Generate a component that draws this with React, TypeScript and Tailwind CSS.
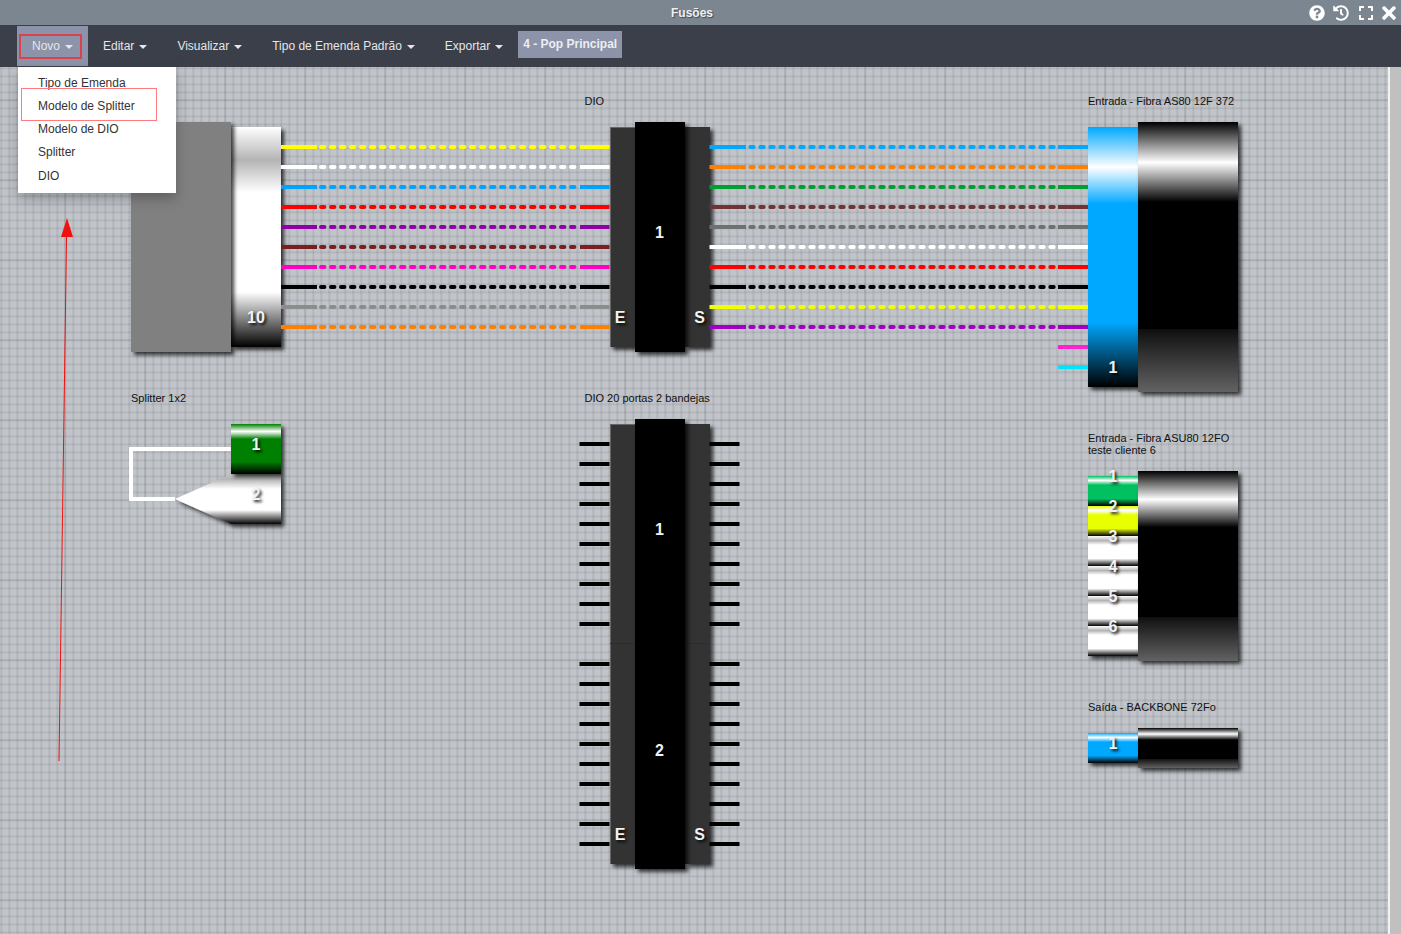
import React from "react";
import { FaQuestionCircle, FaHistory, FaExpand, FaTimes } from "react-icons/fa";

const TOP = 67;
const left = ["#ffff00", "#ffffff", "#00a2ff", "#ff0000", "#8f00a8", "#7a1f1f", "#ff00c0", "#000000", "#8c8c8c", "#ff8000"];
const right = ["#00a8ff", "#ff8000", "#00a030", "#703434", "#707070", "#ffffff", "#ff0000", "#000000", "#f0ff00", "#a000c4"];
const ports = [444, 464, 484, 504, 524, 544, 564, 584, 604, 624, 664, 684, 704, 724, 744, 764, 784, 804, 824, 844];

const TUBE = "bg-[linear-gradient(180deg,#000_0%,#fff_15%,#000_29.6%,#000_76.8%,#0f0f0f_76.8%,#181818_79%,#626262_100%)]";
const WHITE = "bg-[linear-gradient(180deg,#fff_0%,#b4b4b4_15%,#fff_29.6%,#fff_75%,#000_100%)]";
const BLUE = "bg-[linear-gradient(180deg,#00a8ff_0%,#fff_15.4%,#00a8ff_29.6%,#00a8ff_75%,#000_100%)]";
const SHADOW = "shadow-[3px_3px_4px_rgba(0,0,0,0.75)]";

function Num({ children }: { children: React.ReactNode }) {
  return (
    <span className="text-[16px] leading-4 font-bold text-[#f2f2f2] [text-shadow:2px_2px_3px_rgba(0,0,0,0.9)]">
      {children}
    </span>
  );
}

function Caption({ children }: { children: React.ReactNode }) {
  return <div className="mb-[15px] whitespace-nowrap text-[11px] leading-[12px] text-[#111]">{children}</div>;
}

function Node({ x, y, z, children }: { x: number; y: number; z?: boolean; children: React.ReactNode }) {
  return (
    <div className={`absolute ${z ? "z-10" : ""}`} style={{ left: x, top: y - TOP }}>
      {children}
    </div>
  );
}

function NavItem({ label, active }: { label: string; active?: boolean }) {
  return (
    <div className={`mt-px flex h-10 items-center px-[15px] text-[12px] text-[#e4e6ea] ${active ? "bg-[#8d93a8]" : ""}`}>
      {label}
      <span className="ml-[5px] mt-[2px] h-0 w-0 border-x-4 border-t-4 border-x-transparent border-t-[#e8e8e8]" />
    </div>
  );
}

function Side({ letter, edge }: { letter: string; edge?: boolean }) {
  return (
    <div className={`flex w-[25px] flex-1 flex-col items-center justify-end bg-[#333] pb-[21px] ${SHADOW} ${edge ? "border-l border-t border-[#666] pr-[5px]" : "pl-[5px]"}`}>
      <Num>{letter}</Num>
    </div>
  );
}

function Dio({ caption, trays, height }: { caption: string; trays: string[]; height: string }) {
  return (
    <>
      <Caption>{caption}</Caption>
      <div className={`ml-[25px] flex items-stretch ${height}`}>
        <div className="flex py-[5px]"><Side letter="E" edge /></div>
        <div className={`relative z-10 flex w-[50px] flex-col bg-black pb-2 ${SHADOW}`}>
          {trays.map((t) => (
            <div key={t} className="flex flex-1 items-center justify-center"><Num>{t}</Num></div>
          ))}
        </div>
        <div className="flex py-[5px]"><Side letter="S" /></div>
      </div>
    </>
  );
}

function Segment({ n, tone, nudge }: { n: number; tone: string; nudge: string }) {
  return (
    <div className={`flex h-[30px] justify-center ${tone}`}>
      <div className={nudge}><Num>{n}</Num></div>
    </div>
  );
}

export default function App() {
  return (
    <div className="relative flex h-[934px] w-[1401px] flex-col overflow-hidden bg-[#c0c0c0] font-['Liberation_Sans',Arial,sans-serif]">
      <div className="relative flex h-[25px] items-center justify-center bg-[#7b8691] pr-[17px] pt-[1px] text-[12px] font-bold text-[#eef0f2] [text-shadow:1px_1px_1px_rgba(0,0,0,0.45)]">
        Fusões
        <div className="absolute right-[2px] top-[3px] flex items-center text-white">
          <FaQuestionCircle className="text-[16px]" />
          <FaHistory className="ml-2 text-[16px]" />
          <FaExpand className="ml-[9px] text-[16px]" />
          <FaTimes className="ml-[5px] text-[20px]" />
        </div>
      </div>

      <div className="relative z-20 flex h-[42px] bg-[#3a3f49] pl-[17px]">
        <NavItem label="Novo" active />
        <NavItem label="Editar" />
        <NavItem label="Visualizar" />
        <NavItem label="Tipo de Emenda Padrão" />
        <NavItem label="Exportar" />
        <div className="mt-[6px] h-[27px] bg-[#8d93a8] px-[5px] pt-[6px] text-[12px] leading-[15px] font-bold text-[#eceef2]">
          4 - Pop Principal
        </div>
        <div className="absolute left-[19px] top-[9px] h-[25px] w-[63px] border-2 border-[#d8434f]" />
        <div className="absolute left-[18px] top-[42px] w-[158px] bg-white py-[5px] text-[12px] leading-[17.14px] text-[#333] shadow-[0_6px_12px_rgba(0,0,0,0.25)]">
          {["Tipo de Emenda", "Modelo de Splitter", "Modelo de DIO", "Splitter", "DIO"].map((t) => (
            <div key={t} className="px-5 py-[3px]">{t}</div>
          ))}
          <div className="absolute left-[3px] top-[21px] h-[33px] w-[136px] border-[1.5px] border-[#ff7b80]" />
        </div>
      </div>

      <div className="flex min-h-0 flex-1">
        <div className="relative w-[1388px] overflow-hidden bg-[#c1c5ca] bg-[linear-gradient(90deg,transparent_64px,rgba(70,75,85,0.16)_65px,transparent_66px),linear-gradient(180deg,transparent_32px,rgba(70,75,85,0.16)_33px,transparent_34px),linear-gradient(90deg,transparent_0px,rgba(70,75,85,0.16)_1px,transparent_3px,transparent_8px),linear-gradient(180deg,transparent_0px,rgba(70,75,85,0.16)_1px,transparent_3px,transparent_8px)] bg-[length:80px_80px,80px_80px,8px_8px,8px_8px]">
          {/* Cabo de entrada */}
          <Node x={131} y={122}>
            <div className="flex items-center">
              <div className={`relative z-10 h-[230px] w-[100px] bg-[#808080] ${SHADOW}`} />
              <div className={`flex h-[220px] w-[50px] flex-col items-center justify-end pb-[21px] ${WHITE} ${SHADOW}`}>
                <Num>10</Num>
              </div>
            </div>
          </Node>

          {/* DIO */}
          <Node x={584.5} y={95}>
            <Dio caption="DIO" trays={["1"]} height="h-[230px]" />
          </Node>
          <Node x={584.5} y={392}>
            <Dio caption="DIO 20 portas 2 bandejas" trays={["1", "2"]} height="h-[450px]" />
          </Node>

          {/* Fibras */}
          <Node x={1088} y={95}>
            <Caption>Entrada - Fibra AS80 12F 372</Caption>
            <div className="flex items-start">
              <div className={`mt-[5px] flex h-[260px] w-[50px] flex-col items-center justify-end pb-[11px] ${BLUE} ${SHADOW}`}>
                <Num>1</Num>
              </div>
              <div className={`h-[270px] w-[100px] ${TUBE} ${SHADOW}`} />
            </div>
          </Node>

          <Node x={1088} y={432}>
            <Caption>
              Entrada - Fibra ASU80 12FO
              <br />
              teste cliente 6
            </Caption>
            <div className="flex items-start">
              <div className={`mt-[5px] w-[50px] ${SHADOW}`}>
                <Segment n={1} nudge="-mt-[11px]" tone="bg-[linear-gradient(180deg,#00c060_0%,#fff_15%,#00c060_30%,#00c060_75%,#000_100%)]" />
                <Segment n={2} nudge="-mt-[11px]" tone="bg-[linear-gradient(180deg,#e8ff00_0%,#fff_15%,#e8ff00_30%,#e8ff00_75%,#000_100%)]" />
                {[3, 4, 5, 6].map((n) => (
                  <Segment key={n} n={n} nudge="-mt-[11px]" tone={WHITE} />
                ))}
              </div>
              <div className={`h-[190px] w-[100px] ${TUBE} ${SHADOW}`} />
            </div>
          </Node>

          <Node x={1088} y={701}>
            <Caption>Saída - BACKBONE 72Fo</Caption>
            <div className="flex items-start">
              <div className={`mt-[5px] w-[50px] ${SHADOW}`}>
                <Segment n={1} nudge="-mt-px" tone="bg-[linear-gradient(180deg,#00a8ff_0%,#fff_15%,#00a8ff_30%,#00a8ff_75%,#000_100%)]" />
              </div>
              <div className={`h-10 w-[100px] ${TUBE} ${SHADOW}`} />
            </div>
          </Node>

          <svg className="absolute left-0 top-0" width={1388} height={867} viewBox={`0 ${TOP} 1388 867`} fill="none">
            <defs>
              <linearGradient id="sp" x1="0" y1="0" x2="0" y2="1">
                <stop offset="0" stopColor="#c8c8c8" />
                <stop offset="0.1" stopColor="#b4b4b4" />
                <stop offset="0.3" stopColor="#fff" />
                <stop offset="0.72" stopColor="#fff" />
                <stop offset="1" stopColor="#000" />
              </linearGradient>
              <filter id="sh" x="-10%" y="-10%" width="125%" height="125%">
                <feDropShadow dx="3" dy="3" stdDeviation="2" floodColor="#000" floodOpacity="0.75" />
              </filter>
            </defs>

            <polygon points="231,474 281,474 281,524 231,524 175,499" fill="url(#sp)" filter="url(#sh)" />
            <path d="M231 449H131V499H175" stroke="#fff" strokeWidth="4" />

            {left.map((c, i) => {
              const y = 147 + i * 20;
              return (
                <g key={y} stroke={c} strokeWidth="4">
                  <path d={`M281 ${y}H317`} />
                  <path d={`M321 ${y}H575`} strokeDasharray="3.4 6.6" strokeLinecap="round" />
                  <path d={`M580 ${y}H609.5`} />
                </g>
              );
            })}
            {right.map((c, i) => {
              const y = 147 + i * 20;
              return (
                <g key={y} stroke={c} strokeWidth="4">
                  <path d={`M709.5 ${y}H746`} />
                  <path d={`M750.3 ${y}H1055`} strokeDasharray="3.4 6.6" strokeLinecap="round" />
                  <path d={`M1058 ${y}H1088`} />
                </g>
              );
            })}
            <path d="M1058 347H1088" stroke="#ff20d0" strokeWidth="4" />
            <path d="M1058 367H1088" stroke="#00e5ff" strokeWidth="4" />

            {ports.map((y) => (
              <g key={y} stroke="#000" strokeWidth="4">
                <path d={`M579.5 ${y}H609.5`} />
                <path d={`M709.5 ${y}H739.5`} />
              </g>
            ))}
            <path d="M610 643.5H634M686 643.5H709" stroke="#2c2c2c" strokeWidth="1" />
            <path d="M646 644H673" stroke="#222" strokeWidth="1.5" />

            <path d="M59 761L66.6 232" stroke="#f01010" strokeWidth="1" />
            <polygon points="67,218 61,237 73,237" fill="#f01010" />
          </svg>

          {/* Splitter */}
          <Node x={131} y={392} z>
            <div className="mb-5 whitespace-nowrap text-[11px] leading-[12px] text-[#111]">Splitter 1x2</div>
            <div className="ml-[100px] flex w-[50px] flex-col">
              <div className={`flex h-[50px] items-center justify-center pb-2 bg-[linear-gradient(180deg,#008000_0%,#fff_15%,#008000_30%,#008000_75%,#000_100%)] ${SHADOW}`}>
                <Num>1</Num>
              </div>
              <div className="flex h-[50px] items-center justify-center pb-2">
                <Num>2</Num>
              </div>
            </div>
          </Node>
        </div>
        <div className="w-[2px] bg-[#f2f2f2]" />
      </div>
    </div>
  );
}
